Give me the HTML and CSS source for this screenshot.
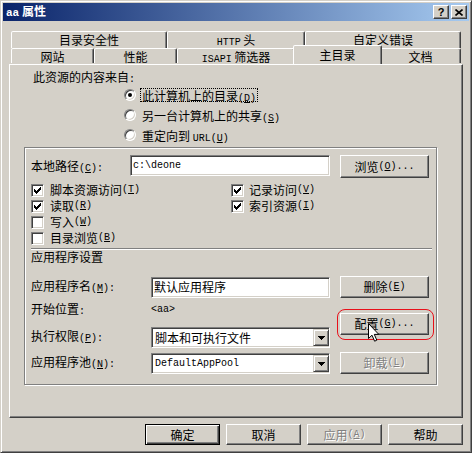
FILE: index.html
```html
<!DOCTYPE html>
<html lang="zh-CN">
<head>
<meta charset="utf-8">
<title>aa 属性</title>
<link rel="stylesheet" href="styles.css">
</head>
<body>
<div class="window">
  <div class="titlebar">
    <div class="title"><span class="t-en">aa</span> 属性</div>
    <div class="tbtns">
      <span class="tbtn q">?</span>
      <span class="tbtn"><svg width="8" height="7" viewBox="0 0 8 7"><path d="M0.5,0.5 L7.5,6.5 M7.5,0.5 L0.5,6.5" stroke="#000" stroke-width="1.6" fill="none"/></svg></span>
    </div>
  </div>

  <div class="tabs">
    <div class="tabrow back">
      <div class="tab t-sec">目录安全性</div>
      <div class="tab t-http"><span class="en">HTTP</span> 头</div>
      <div class="tab t-err">自定义错误</div>
    </div>
    <div class="tabrow front">
      <div class="tab t-site">网站</div>
      <div class="tab t-perf">性能</div>
      <div class="tab t-isapi"><span class="en">ISAPI</span> 筛选器</div>
      <div class="tab t-home sel">主目录</div>
      <div class="tab t-doc">文档</div>
    </div>
  </div>

  <div class="panel">
    <div class="src-label">此资源的内容来自<span class="en">:</span></div>
    <div class="radios">
      <div class="radio-row"><span class="radio on"></span><span class="rlabel focus">此计算机上的目录<span class="en">(<u>D</u>)</span></span></div>
      <div class="radio-row"><span class="radio"></span><span class="rlabel">另一台计算机上的共享<span class="en">(<u>S</u>)</span></span></div>
      <div class="radio-row"><span class="radio"></span><span class="rlabel">重定向到 <span class="en">URL(<u>U</u>)</span></span></div>
    </div>

    <div class="group">
      <div class="path-row">
        <span class="lbl lbl-path">本地路径<span class="en">(<u>C</u>):</span></span>
        <div class="field path-field"><span class="en val-en">c:\deone</span></div>
        <button class="btn side">浏览<span class="en">(<u>O</u>)...</span></button>
      </div>

      <div class="checks">
        <div class="ccol left">
          <div class="chk"><span class="box"><svg class="tick" width="7" height="7" viewBox="0 0 7 7"><path d="M0,2h1v3h-1z M1,3h1v3h-1z M2,4h1v3h-1z M3,3h1v3h-1z M4,2h1v3h-1z M5,1h1v3h-1z M6,0h1v3h-1z" fill="#000"/></svg></span>脚本资源访问<span class="en">(<u>T</u>)</span></div>
          <div class="chk"><span class="box"><svg class="tick" width="7" height="7" viewBox="0 0 7 7"><path d="M0,2h1v3h-1z M1,3h1v3h-1z M2,4h1v3h-1z M3,3h1v3h-1z M4,2h1v3h-1z M5,1h1v3h-1z M6,0h1v3h-1z" fill="#000"/></svg></span>读取<span class="en">(<u>R</u>)</span></div>
          <div class="chk"><span class="box"></span>写入<span class="en">(<u>W</u>)</span></div>
          <div class="chk"><span class="box"></span>目录浏览<span class="en">(<u>B</u>)</span></div>
        </div>
        <div class="ccol right">
          <div class="chk"><span class="box"><svg class="tick" width="7" height="7" viewBox="0 0 7 7"><path d="M0,2h1v3h-1z M1,3h1v3h-1z M2,4h1v3h-1z M3,3h1v3h-1z M4,2h1v3h-1z M5,1h1v3h-1z M6,0h1v3h-1z" fill="#000"/></svg></span>记录访问<span class="en">(<u>V</u>)</span></div>
          <div class="chk"><span class="box"><svg class="tick" width="7" height="7" viewBox="0 0 7 7"><path d="M0,2h1v3h-1z M1,3h1v3h-1z M2,4h1v3h-1z M3,3h1v3h-1z M4,2h1v3h-1z M5,1h1v3h-1z M6,0h1v3h-1z" fill="#000"/></svg></span>索引资源<span class="en">(<u>I</u>)</span></div>
        </div>
      </div>

      <div class="sep"></div>
      <div class="sec-title">应用程序设置</div>

      <div class="app">
        <div class="app-left">
          <div class="arow r-name">
            <span class="lbl lbl-app">应用程序名<span class="en">(<u>M</u>):</span></span>
            <div class="field app-field">默认应用程序</div>
          </div>
          <div class="arow r-start">
            <span class="lbl lbl-app">开始位置<span class="en">:</span></span>
            <span class="en start-val">&lt;aa&gt;</span>
          </div>
          <div class="arow r-perm">
            <span class="lbl lbl-app">执行权限<span class="en">(<u>P</u>):</span></span>
            <div class="field select"><span class="sel-val">脚本和可执行文件</span><span class="drop"><svg width="7" height="4" viewBox="0 0 7 4"><path d="M0,0h7v1h-1v1h-1v1h-1v1h-1v-1h-1v-1h-1v-1h-1z" fill="#000"/></svg></span></div>
          </div>
          <div class="arow r-pool">
            <span class="lbl lbl-app">应用程序池<span class="en">(<u>N</u>):</span></span>
            <div class="field select"><span class="sel-val en val-en">DefaultAppPool</span><span class="drop"><svg width="7" height="4" viewBox="0 0 7 4"><path d="M0,0h7v1h-1v1h-1v1h-1v1h-1v-1h-1v-1h-1v-1h-1z" fill="#000"/></svg></span></div>
          </div>
        </div>
        <div class="app-right">
          <button class="btn side">删除<span class="en">(<u>E</u>)</span></button>
          <div class="cfg-wrap">
            <button class="btn side">配置<span class="en">(<u>G</u>)...</span></button>
            <span class="ring"></span>
            <svg class="cursor" width="12" height="19" viewBox="0 0 12 19"><path d="M0.5,0.5 L0.5,15.5 L4,12.2 L6.6,18.2 L8.8,17.2 L6.3,11.4 L10.8,11.4 Z" fill="#fff" stroke="#000" stroke-width="1" stroke-linejoin="miter"/></svg>
          </div>
          <button class="btn side disabled">卸载<span class="en">(<u>L</u>)</span></button>
        </div>
      </div>
    </div>
  </div>

  <div class="footer">
    <button class="btn foot default">确定</button>
    <button class="btn foot">取消</button>
    <button class="btn foot disabled">应用<span class="en">(<u>A</u>)</span></button>
    <button class="btn foot">帮助</button>
  </div>
</div>
</body>
</html>
```

FILE: styles.css
```css
* { box-sizing: border-box; }
html, body { margin: 0; padding: 0; background: #d4d0c8; }
body {
  font-family: "Noto Sans CJK SC", "Noto Sans", sans-serif;
  font-size: 12px;
  line-height: 16px;
  color: #000;
}
.en { font-family: "Liberation Mono", monospace; font-size: 10px; }
u { text-decoration: underline; text-underline-offset: 1px; }

.window {
  width: 472px;
  height: 453px;
  border: 1px solid;
  border-color: #d4d0c8 #404040 #404040 #d4d0c8;
  box-shadow: inset 1px 1px #fff, inset -1px -1px #808080;
  padding: 2px;
  display: flex;
  flex-direction: column;
  background: #d4d0c8;
}

/* title bar */
.titlebar {
  height: 18px;
  background: linear-gradient(to right, #0a246a, #a6caf0);
  display: flex;
  align-items: center;
  justify-content: space-between;
  padding: 0 2px 0 3px;
}
.title { color: #fff; font-weight: bold; font-size: 12px; line-height: 18px; }
.t-en { font-family: "Liberation Mono", monospace; font-weight: bold; font-size: 11px; }
.tbtns { display: flex; gap: 2px; }
.tbtn {
  width: 16px; height: 14px;
  background: #d4d0c8;
  border: 1px solid;
  border-color: #fff #404040 #404040 #fff;
  box-shadow: inset -1px -1px #808080;
  display: flex; align-items: center; justify-content: center;
}
.tbtn.q { font-family: "Liberation Sans", sans-serif; font-weight: bold; font-size: 11px; line-height: 12px; }

/* tabs */
.tabs { margin: 10px 0 0 8px; }
.tabrow { display: flex; }
.tab {
  background: #d4d0c8;
  border: 1px solid;
  border-bottom: none;
  border-color: #fff #404040 transparent #fff;
  box-shadow: inset -1px 0 #808080;
  border-radius: 2px 2px 0 0;
  text-align: center;
  white-space: nowrap;
}
.back .tab { height: 17px; line-height: 16px; }
.front .tab { height: 15px; line-height: 15px; }
.front .tab.sel {
  height: 19px;
  margin: -3px -2px 0 -2px;
  line-height: 17px;
  position: relative;
  z-index: 2;
  box-shadow: inset -1px 0 #808080;
}
.t-sec { width: 156px; }
.t-http { width: 138px; }
.t-err { width: 156px; }
.t-site { width: 83px; }
.t-perf { width: 83px; }
.t-isapi { width: 118px; }
.t-home { width: 89px; }
.t-doc { width: 81px; }

/* panel */
.panel {
  margin-left: 6px;
  width: 454px;
  height: 354px;
  border: 1px solid;
  border-color: #fff #404040 #404040 #fff;
  box-shadow: inset -1px -1px #808080;
  padding-top: 4px;
}
.src-label { padding-left: 23px; height: 16px; line-height: 16px; }

.radios { margin-left: 114px; }
.radio-row { height: 20px; display: flex; align-items: center; }
.radio {
  width: 12px; height: 12px;
  border-radius: 50%;
  background: #fff;
  border: 1px solid;
  border-color: #808080 #fff #fff #808080;
  box-shadow: inset 1px 1px #404040, inset -1px -1px #d4d0c8;
  display: flex; align-items: center; justify-content: center;
  flex: none;
}
.radio.on::after {
  content: "";
  width: 4px; height: 4px;
  border-radius: 50%;
  background: #000;
}
.rlabel {
  margin-left: 4px;
  height: 14px;
  line-height: 13px;
  padding: 0 1px;
  border: 1px solid transparent;
  white-space: nowrap;
}
.rlabel.focus { border: 1px dotted #000; }

/* group */
.group {
  margin: 2px 0 0 14px;
  width: 413px;
  height: 238px;
  border: 1px solid #808080;
  box-shadow: 1px 1px #fff, inset 1px 1px #fff;
  padding: 7px 0 0 6px;
}
.lbl { white-space: nowrap; flex: none; }
.path-row { display: flex; align-items: flex-start; height: 23px; }
.lbl-path { width: 99px; line-height: 21px; }
.field {
  background: #fff;
  border: 1px solid;
  border-color: #808080 #fff #fff #808080;
  box-shadow: inset 1px 1px #404040, inset -1px -1px #d4d0c8;
  height: 21px;
  display: flex;
  align-items: center;
  white-space: nowrap;
}
.path-field { width: 200px; padding-left: 2px; }
.val-en { font-size: 10px; }

.btn {
  font: inherit;
  font-size: 12px;
  line-height: 16px;
  color: #000;
  background: #d4d0c8;
  border: 1px solid;
  border-color: #fff #404040 #404040 #fff;
  box-shadow: inset -1px -1px #808080;
  padding: 0;
  margin: 0;
  display: flex;
  align-items: center;
  justify-content: center;
  white-space: nowrap;
}
.btn.side { width: 89px; height: 22px; }
.path-row .btn.side { margin-left: 10px; height: 23px; }
.btn.disabled { color: #808080; text-shadow: 1px 1px #fff; }

.checks { display: flex; margin-top: 4px; }
.ccol.left { width: 200px; }
.chk { display: flex; align-items: center; height: 16px; white-space: nowrap; }
.box {
  width: 13px; height: 13px;
  background: #fff;
  border: 1px solid;
  border-color: #808080 #fff #fff #808080;
  box-shadow: inset 1px 1px #404040, inset -1px -1px #d4d0c8;
  margin-right: 6px;
  flex: none;
  padding: 2px;
}
.ccol.right .box { margin-right: 5px; }
.tick { display: block; shape-rendering: crispEdges; }

.sep {
  margin-top: 2px;
  width: 401px;
  height: 2px;
  border-top: 1px solid #808080;
  border-bottom: 1px solid #fff;
}
.sec-title { height: 14px; line-height: 14px; }

.app { display: flex; margin-top: 12px; }
.app-left { width: 299px; }
.app-right { margin-left: 10px; width: 89px; }
.arow { display: flex; align-items: center; }
.lbl-app { width: 120px; }
.r-name { height: 22px; }
.app-field { width: 179px; padding-left: 2px; }
.r-start { margin-top: 4px; height: 16px; }
.start-val { font-size: 10px; }
.r-perm { margin-top: 9px; height: 21px; }
.r-pool { margin-top: 5px; height: 21px; }
.select { width: 179px; padding-left: 3px; justify-content: space-between; }
.select .sel-val { flex: 1; }
.drop {
  width: 16px; height: 17px;
  background: #d4d0c8;
  border: 1px solid;
  border-color: #d4d0c8 #404040 #404040 #d4d0c8;
  box-shadow: inset 1px 1px #fff, inset -1px -1px #808080;
  display: flex; align-items: center; justify-content: center;
  flex: none;
}
.drop svg { display: block; shape-rendering: crispEdges; }

.cfg-wrap { position: relative; margin-top: 15px; }
.app-right .disabled { margin-top: 17px; }
.ring {
  position: absolute;
  left: -3px; top: -4px;
  width: 97px; height: 31px;
  border: 1px solid #e8101a;
  border-radius: 8px;
}
.cursor { position: absolute; left: 28px; top: 10px; display: block; }

/* footer */
.footer {
  display: flex;
  justify-content: flex-end;
  gap: 6px;
  margin-top: 6px;
  padding-right: 6px;
}
.btn.foot { width: 75px; height: 21px; }
.btn.default {
  border: 1px solid #000;
  box-shadow: inset 1px 1px #fff, inset -1px -1px #404040, inset -2px -2px #808080;
}
```
